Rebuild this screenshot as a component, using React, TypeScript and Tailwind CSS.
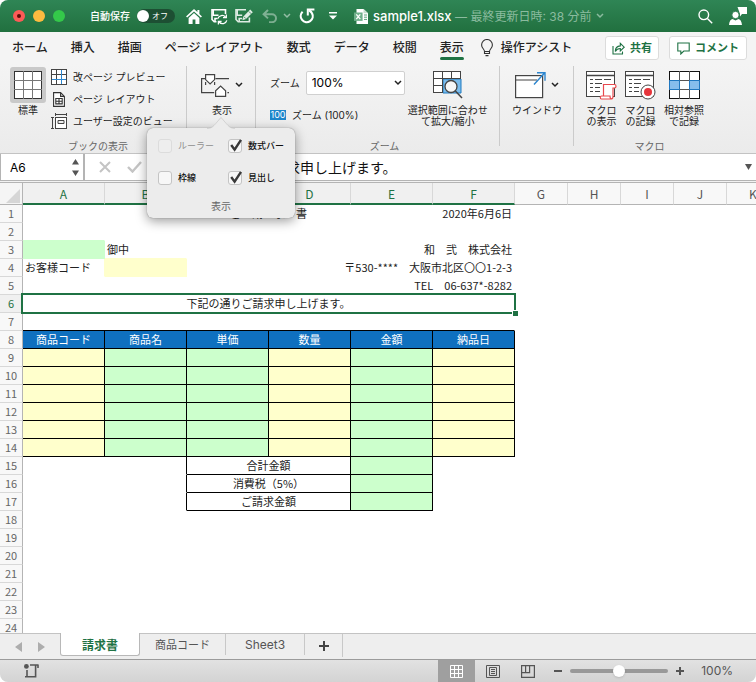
import { useState } from "react";
import type { ReactNode } from "react";

type Cell = {
  span?: number;
  text?: string;
  cls?: string;
  selected?: boolean;
};

const YELLOW = "bg-[#ffffcc]";
const GREEN = "bg-[#ccffcc]";
const BOX = "border-b-black border-r-black";
const HEAD = "bg-[#0f70bf] text-white text-center border-b-black border-r-black";
const SUM = "text-center border-b-black border-r-black";
const LEFT = "text-left pl-[2px]";
const RIGHT = "text-right pr-[2px]";

const itemRow: Cell[] = [
  { cls: `${YELLOW} ${BOX}` },
  { cls: `${GREEN} ${BOX}` },
  { cls: `${GREEN} ${BOX}` },
  { cls: `${YELLOW} ${BOX}` },
  { cls: `${GREEN} ${BOX}` },
  { cls: `${YELLOW} ${BOX}` },
];

const sumRow = (text: string): Cell[] => [
  {},
  { cls: "border-r-black" },
  { span: 2, text, cls: SUM },
  { cls: `${GREEN} ${BOX}` },
  {},
];

const rows: Cell[][] = [
  [
    { span: 5, text: "ご　請　求　書", cls: "text-center pl-[82px]" },
    { text: "2020年6月6日", cls: RIGHT },
  ],
  [{ cls: "border-b-[#ccffcc]" }, { span: 5 }],
  [
    { cls: `${GREEN} border-r-[#ccffcc] border-b-[#ccffcc]` },
    { text: "御中", cls: `${LEFT} border-b-[#ffffcc]` },
    { span: 4, text: "和　弐　株式会社", cls: RIGHT },
  ],
  [
    { text: "お客様コード", cls: `${LEFT} border-r-[#ffffcc]` },
    { cls: `${YELLOW} border-r-[#ffffcc] border-b-[#ffffcc]` },
    { span: 4, text: "〒530-****　大阪市北区〇〇1-2-3", cls: RIGHT },
  ],
  [{ span: 6, text: "TEL　06-637*-8282", cls: RIGHT }],
  [{ span: 6, text: "下記の通りご請求申し上げます。", cls: "text-center", selected: true }],
  [{ span: 6, cls: "border-b-black" }],
  ["商品コード", "商品名", "単価", "数量", "金額", "納品日"].map((text) => ({ text, cls: HEAD })),
  itemRow,
  itemRow,
  itemRow,
  itemRow,
  itemRow,
  itemRow,
  sumRow("合計金額"),
  sumRow("消費税（5%）"),
  sumRow("ご請求金額"),
  ...Array.from({ length: 7 }, (): Cell[] => [{ span: 6 }]),
];

function Chevron({ className = "" }: { className?: string }) {
  return (
    <svg className={className} width="8" height="6" viewBox="0 0 8 6" fill="none" stroke="currentColor" strokeWidth="1.5">
      <path d="M1 1l3 3 3-3" />
    </svg>
  );
}

/* ---------- title bar ---------- */

function TitleBar() {
  return (
    <header className="flex h-8 shrink-0 items-center bg-linear-to-b from-[#2f8555] to-[#21703f] pr-[9px] pl-[13px] text-white">
      <div className="flex gap-2">
        <button aria-label="閉じる" className="flex size-3 items-center justify-center rounded-full bg-[#fc5b57]">
          <span className="size-1 rounded-full bg-[#5c0b08]" />
        </button>
        <button aria-label="しまう" className="size-3 rounded-full bg-[#fdbb40]" />
        <button aria-label="拡大" className="size-3 rounded-full bg-[#34c84a]" />
      </div>
      <span className="ml-[25px] text-[10px] font-medium">自動保存</span>
      <button
        role="switch"
        aria-checked="false"
        aria-label="自動保存"
        className="ml-[7px] flex h-[14px] w-[38px] items-center gap-[3px] rounded-full bg-[#1d4f33]"
      >
        <span className="size-3 rounded-full bg-white" />
        <span className="text-[8px] leading-3">オフ</span>
      </button>
      <button aria-label="ホーム" className="ml-[11px]">
        <svg width="16" height="15" viewBox="0 0 16 15" fill="white">
          <path d="M8 0L0 7.4l1.2 1.2L8 2.4l6.8 6.2L16 7.4l-2.6-2.5V1h-2v2.1z" />
          <path d="M8 4L2.6 9v6h4v-4.6h2.8V15h4V9z" />
        </svg>
      </button>
      <button aria-label="保存して更新" className="ml-[9px]">
        <svg width="17" height="17" viewBox="0 0 17 17" fill="none" stroke="white" strokeWidth="1.6">
          <path d="M5.5 13.7H3.2L1 11.5V1.8h13.5V6" />
          <path d="M2.2 2v5.2h5.3" />
          <path d="M4 13.5v-3h2.6" />
          <path d="M6.9 10.6a4.3 4.3 0 0 1 7.6-1.4M15.8 12.4a4.3 4.3 0 0 1-7.6 1.6" strokeWidth="1.3" />
          <path d="M15.3 6.4v3.3H12M7.4 16.6v-3.2h3.2" strokeWidth="1.3" />
        </svg>
      </button>
      <button aria-label="名前を付けて保存" className="ml-[7px] opacity-85">
        <svg width="18" height="16" viewBox="0 0 18 16" fill="none" stroke="white" strokeWidth="1.6">
          <path d="M11 1.8H1v9.7l2.2 2.2h11.2V9.5" />
          <path d="M2.2 2v5.2h5" />
          <path d="M4.2 13.5v-3h3" />
          <path d="M7.4 12.2l1-3.8 6.8-6.8 2.6 2.6-6.8 6.8z" fill="white" stroke="none" />
          <path d="M9 8.8l1.8 1.8M13.8 3.4l2.4 2.4" stroke="#2a7b4c" strokeWidth=".8" />
        </svg>
      </button>
      <button aria-label="元に戻す" className="ml-[9px] opacity-40">
        <svg width="16" height="14" viewBox="0 0 16 14" fill="none" stroke="white" strokeWidth="2">
          <path d="M6 1L1.6 5.2 6 9.4M2 5.2h8a4 4 0 0 1 0 8H7" />
        </svg>
      </button>
      <Chevron className="ml-[5px] opacity-50" />
      <button aria-label="やり直し" className="ml-2">
        <svg width="16" height="16" viewBox="0 0 16 16" fill="none" stroke="white" strokeWidth="2.2">
          <path d="M3.6 3.8a6 6 0 1 0 9.4 1.4c-.6-1.2-1.6-2.2-3-3" />
          <path d="M15.4 1.4H8.8v6.2" strokeWidth="2" />
        </svg>
      </button>
      <button aria-label="クイック アクセスのカスタマイズ" className="ml-[14px]">
        <svg width="8" height="8" viewBox="0 0 8 8" fill="white">
          <path d="M0 0h8v1.6H0zM0 3.4h8L4 7.6z" />
        </svg>
      </button>
      <div className="ml-[17px] flex min-w-0 items-center gap-[5px]">
        <svg className="shrink-0" width="14" height="15" viewBox="0 0 14 15">
          <path d="M2.5 0h7L14 4.2V15H2.5z" fill="#fff" />
          <path d="M9.5 0L14 4.2H9.5z" fill="#c4ddcd" />
          <path d="M10 6h3M10 8.2h3M10 10.4h3" stroke="#5aa27a" strokeWidth="1" />
          <rect y="3.5" width="8.6" height="8.4" fill="#6fb08b" />
          <path d="M2.3 5.4l4 4.8M6.3 5.4l-4 4.8" stroke="#fff" strokeWidth="1.3" />
        </svg>
        <h1 className="truncate text-[13px] leading-4 font-medium">
          sample1.xlsx <span className="text-[12px] font-normal text-[#8bbb9f]">— 最終更新日時: 38 分前</span>
        </h1>
        <Chevron className="shrink-0 text-[#8bbb9f]" />
      </div>
      <div className="ml-auto flex items-center gap-4">
        <button aria-label="検索">
          <svg width="15" height="15" viewBox="0 0 15 15" fill="none" stroke="white" strokeWidth="1.4">
            <circle cx="5.8" cy="5.8" r="4.8" />
            <path d="M9.4 9.4l4.8 4.8" />
          </svg>
        </button>
        <button aria-label="アカウント">
          <svg width="18" height="18" viewBox="0 0 18 18" fill="white">
            <path d="M8.5 0H18v7h-5l-2 2.4V7z" />
            <circle cx="6.5" cy="8" r="3.7" stroke="#277a4a" strokeWidth="1" />
            <path d="M0 18c.2-4 2-6 3.6-6l2.9 1.6L9.4 12c1.6 0 3.3 2 3.6 6z" />
          </svg>
        </button>
      </div>
    </header>
  );
}

/* ---------- ribbon ---------- */

const tabs = ["ホーム", "挿入", "描画", "ページ レイアウト", "数式", "データ", "校閲", "表示"];

function RibbonTabs() {
  return (
    <nav className="flex h-8 shrink-0 items-center gap-[23px] bg-[#f4f4f4] pr-[9px] pl-3 text-[12px] font-medium whitespace-nowrap text-[#222]">
      {tabs.map((t) => (
        <button key={t} className="relative h-full">
          {t}
          {t === "表示" && <span className="absolute inset-x-0 bottom-[4px] h-[3px] rounded-full bg-[#1f7244]" />}
        </button>
      ))}
      <button className="-ml-[6px] flex items-center gap-2">
        <svg width="12" height="18" viewBox="0 0 12 18" fill="none" stroke="#333" strokeWidth="1.1">
          <path d="M3.5 12.5c0-2.5-2.9-3.2-2.9-6.6a5.4 5.4 0 0 1 10.8 0c0 3.4-2.9 4.1-2.9 6.6zM3.5 12.5v2h5v-2M4.5 16.6h3" />
        </svg>
        操作アシスト
      </button>
      <div className="ml-auto flex gap-[10px] text-[11px] font-bold text-[#1f7244]">
        <button className="flex h-6 items-center gap-[5px] rounded-[3px] border border-[#dcdcdc] bg-white px-[6px]">
          <svg width="13" height="13" viewBox="0 0 13 13" fill="none" stroke="currentColor" strokeWidth="1.1">
            <path d="M1 4v8h9.5V9.6" />
            <path d="M3.3 9.5c0-3.4 1.6-5.4 5-5.6V1.4L12.2 5.2 8.3 9V6.5c-2.4 0-3.8.8-5 3z" />
          </svg>
          共有
        </button>
        <button className="flex h-6 items-center gap-[5px] rounded-[3px] border border-[#dcdcdc] bg-white px-[7px]">
          <svg width="13" height="13" viewBox="0 0 13 13" fill="none" stroke="currentColor" strokeWidth="1.1">
            <path d="M.8 1h11.4v8H6.8l-3 3V9h-3z" />
          </svg>
          コメント
        </button>
      </div>
    </nav>
  );
}

function Group({ label, className, children }: { label?: string; className: string; children: ReactNode }) {
  return (
    <section className={`flex h-[87px] shrink-0 flex-col ${className}`}>
      <div className="relative flex flex-1 items-start">{children}</div>
      {label && <div className="text-center text-[10px] leading-[14px] text-[#666]">{label}</div>}
    </section>
  );
}

function Divider() {
  return <span className="h-20 w-px shrink-0 bg-[#cbcbcb]" />;
}

function BigButton({ lines, icon }: { lines: string[]; icon: ReactNode }) {
  return (
    <button className="flex flex-col items-center text-[10px] leading-[11px] whitespace-nowrap">
      <span className="mb-px flex h-[38px] items-center">{icon}</span>
      {lines.map((l) => (
        <span key={l}>{l}</span>
      ))}
    </button>
  );
}

function SmallButton({ text, icon }: { text: string; icon: ReactNode }) {
  return (
    <button className="flex h-[22px] items-center gap-[6px] text-[10px] whitespace-nowrap">
      <span className="flex w-4 justify-center">{icon}</span>
      {text}
    </button>
  );
}

function Tick({ label, checked, disabled }: { label: string; checked?: boolean; disabled?: boolean }) {
  const [on, setOn] = useState(!!checked);
  return (
    <label className={`flex items-center gap-[6px] text-[9px] leading-4 whitespace-nowrap ${disabled ? "text-[#8f8f8f]" : "font-medium text-[#111]"}`}>
      <span className="relative flex">
        <input
          type="checkbox"
          checked={on}
          disabled={disabled}
          onChange={(e) => setOn(e.target.checked)}
          className="size-[14px] appearance-none rounded-[3px] border border-[#c4c4c4] bg-[#f7f7f7] disabled:border-[#dcdcdc] disabled:bg-[#eeeeee]"
        />
        {on && (
          <svg className="pointer-events-none absolute top-0 left-[2px]" width="13" height="13" viewBox="0 0 13 13" fill="none" stroke="#3a3a3a" strokeWidth="2.4">
            <path d="M1.2 6l3.4 4.6L11 .8" />
          </svg>
        )}
      </span>
      {label}
    </label>
  );
}

function ShowPopover() {
  return (
    <div className="absolute top-[62px] -left-[40px] z-10 h-[90px] w-[148px] rounded-md bg-[#ececec] shadow-[0_3px_12px_rgba(0,0,0,0.4),0_0_1px_rgba(0,0,0,0.5)]">
      <svg className="absolute -top-[11px] left-[60px]" width="28" height="12" viewBox="0 0 28 12">
        <path d="M0 12c6 0 8-5 14-12 6 7 8 12 14 12z" fill="#ececec" />
        <path d="M0 11.5C6 11.5 8 7 14 .5c6 6.5 8 11 14 11" fill="none" stroke="#c8c8c8" strokeWidth=".7" />
      </svg>
      <div className="grid grid-cols-[70px_auto] gap-y-4 pt-[10px] pl-[11px]">
        <Tick label="ルーラー" disabled />
        <Tick label="数式バー" checked />
        <Tick label="枠線" />
        <Tick label="見出し" checked />
      </div>
      <div className="mt-[13px] text-center text-[10px] leading-[14px] text-[#666]">表示</div>
    </div>
  );
}

function MacroSheet({ children }: { children: ReactNode }) {
  return (
    <svg width="31" height="30" viewBox="0 0 31 30" fill="none" stroke="#444">
      <rect x=".5" y="1.5" width="28" height="25" fill="#fff" />
      <path d="M0 5.5h29" strokeWidth="1.4" />
      <path d="M4 9.5h3M9 9.5h7M18 9.5h7M4 13.5h3M9 13.5h7M4 17.5h3M9 17.5h5M4 21.5h3M9 21.5h5" />
      {children}
    </svg>
  );
}

function Ribbon() {
  const [zoom, setZoom] = useState("100%");
  return (
    <div className="flex h-[90px] shrink-0 border-b border-[#c3c3c3] bg-linear-to-b from-[#f4f4f4] to-[#ebebeb] pt-[2px] text-[#222]">
      <Group label="ブックの表示" className="w-[186px] pl-[10px]">
        <BigButton
          lines={["標準"]}
          icon={
            <span className="flex size-9 items-center justify-center rounded-[3px] bg-[#c9c9c9]">
              <svg width="28" height="28" viewBox="0 0 28 28" fill="none" stroke="#333">
                <rect x=".5" y=".5" width="27" height="27" fill="#fff" />
                <path d="M9.5 0v28M18.5 0v28M0 9.5h28M0 18.5h28" stroke="#777" />
              </svg>
            </span>
          }
        />
        <div className="ml-[5px]">
          <SmallButton
            text="改ページ プレビュー"
            icon={
              <svg width="16" height="16" viewBox="0 0 16 16" fill="none" stroke="#444">
                <rect x=".5" y=".5" width="15" height="15" fill="#fff" />
                <path d="M5.5 0v16M0 5.5h16" />
                <path d="M10.5 1v14M1 10.5h14" stroke="#2c86cf" />
              </svg>
            }
          />
          <SmallButton
            text="ページ レイアウト"
            icon={
              <svg width="12" height="15" viewBox="0 0 12 15" fill="none" stroke="#333" strokeWidth="1.1">
                <path d="M.6.6h7l3.8 3.8v10H.6zM7.6.6v3.8h3.8" fill="#fff" />
                <path d="M2.8 6.5h6.4v5.4H2.8zM6 6.5v5.4M2.8 9.2h6.4" />
              </svg>
            }
          />
          <SmallButton
            text="ユーザー設定のビュー"
            icon={
              <svg width="16" height="16" viewBox="0 0 16 16" fill="none" stroke="#444">
                <path d="M4.5 1.5h11M4.5 0v3M15.5 0v3M1.5 4v11M0 4.5h3M0 15.5h3" />
                <rect x="4.5" y="4.5" width="11" height="11" fill="#fff" />
                <path d="M7 7.5h6v3H7z" fill="#eee" />
              </svg>
            }
          />
        </div>
      </Group>
      <Divider />

      <Group className="w-[68px]">
        <div className="flex pl-[14px]">
          <BigButton
            lines={["表示"]}
            icon={
              <span className="flex items-center gap-[6px]">
                <svg width="28" height="23" viewBox="0 0 28 23" fill="none" stroke="#444" strokeWidth="1.2">
                  <path d="M4 4.6H.6v14h12.6M14.4 4.6H28M4.6 8v3M13.6 8v3M26.4 18.6H28" />
                  <path d="M4.6.6h9v5L9.1 10 4.6 5.6z" fill="#fff" />
                  <path d="M14.6 22.4h10v-5.6L19.6 12l-5 4.8z" fill="#fff" />
                </svg>
                <Chevron />
              </span>
            }
          />
        </div>
        <ShowPopover />
      </Group>
      <Divider />

      <Group label="ズーム" className="w-[243px] pl-[14px]">
        <div className="pt-[5px]">
          <div className="flex items-center gap-[6px] text-[10px]">
            <label htmlFor="zoom">ズーム</label>
            <div className="relative">
              <select
                id="zoom"
                value={zoom}
                onChange={(e) => setZoom(e.target.value)}
                className="h-6 w-[99px] appearance-none rounded-[2px] border border-[#d0d0d0] bg-white pl-[5px] text-[12px] leading-4 text-black"
              >
                <option>200%</option>
                <option>100%</option>
                <option>75%</option>
              </select>
              <Chevron className="pointer-events-none absolute top-[9px] right-[3px]" />
            </div>
          </div>
          <button className="mt-[14px] flex h-3 items-center gap-[6px] text-[10px]">
            <span className="flex h-[10px] w-4 items-center justify-center bg-[#1e86cb] text-[9px] leading-[10px] text-white">100</span>
            ズーム (100%)
          </button>
        </div>
        <div className="ml-[3px]">
          <BigButton
            lines={["選択範囲に合わせ", "て拡大/縮小"]}
            icon={
              <svg width="30" height="28" viewBox="0 0 30 28" fill="none" stroke="#444">
                <rect x=".5" y=".5" width="27" height="21" fill="#fff" />
                <path d="M10 8h18v14H10z" fill="#7bbcec" stroke="#1e7ac0" />
                <path d="M9.5 0v22M18.5 0v8M0 7.5h28M0 14.5h10" />
                <circle cx="18" cy="15.5" r="6" fill="#f6f6f6" strokeWidth="1.3" />
                <path d="M22.4 20l6.6 7" strokeWidth="1.5" />
              </svg>
            }
          />
        </div>
      </Group>
      <Divider />

      <Group className="w-[73px] pl-3">
        <BigButton
          lines={["ウインドウ"]}
          icon={
            <span className="flex items-center gap-[5px]">
              <svg width="31" height="27" viewBox="0 0 31 27" fill="none" stroke="#444" strokeWidth="1.2">
                <rect x=".6" y="3.6" width="27" height="22" fill="#fff" />
                <path d="M0 8h22" />
                <path d="M19 12.5L29.5 1M22 .8h8v8" stroke="#2c86cf" strokeWidth="1.4" />
              </svg>
              <Chevron />
            </span>
          }
        />
      </Group>
      <Divider />

      <Group label="マクロ" className="w-[139px] pl-3">
        <div className="flex gap-2">
          <BigButton
            lines={["マクロ", "の表示"]}
            icon={
              <MacroSheet>
                <path d="M17.5 14.5h11c2 0 2 3.5 0 3.5h-1.5v8.5c0 1.5-.6 2.5-2 2.5h-9.5c-1.6 0-1.6-3 0-3h2zM17.5 26h6.5c0 2 .5 3 1.6 3" fill="#fff" stroke="#e8484d" strokeWidth="1.2" />
              </MacroSheet>
            }
          />
          <BigButton
            lines={["マクロ", "の記録"]}
            icon={
              <MacroSheet>
                <circle cx="23" cy="22" r="7" fill="#fff" />
                <circle cx="23" cy="22" r="4" fill="#e6353b" stroke="none" />
              </MacroSheet>
            }
          />
          <BigButton
            lines={["相対参照", "で記録"]}
            icon={
              <svg width="31" height="28" viewBox="0 0 31 28" fill="none" stroke="#111">
                <rect x=".5" y=".5" width="30" height="27" fill="#fff" />
                <path d="M10.5 0v28M20.5 0v28M0 9.5h31M0 18.5h31" stroke="#555" />
                <path d="M.5 9.5h10v9H.5zM20.5 9.5h10v9h-10z" fill="#86bdec" stroke="#1f77c0" />
              </svg>
            }
          />
        </div>
      </Group>
    </div>
  );
}

/* ---------- formula bar ---------- */

function FormulaBar() {
  return (
    <div className="flex h-[29px] shrink-0 items-stretch border-b border-[#b4b4b4] bg-[#f2f2f2]">
      <div className="mb-px flex min-w-0 flex-1 items-center border-b border-[#b4b4b4] bg-white">
        <div className="flex h-full w-[85px] shrink-0 items-center border-r-2 border-l border-[#b4b4b4] pr-1 pl-[9px]">
          <input aria-label="名前ボックス" defaultValue="A6" className="w-full min-w-0 bg-transparent pt-[2px] text-[12px] outline-none" />
          <svg className="shrink-0" width="7" height="17" viewBox="0 0 7 17" fill="#555">
            <path d="M3.5 0L7 5.5H0zM3.5 17L7 11.5H0z" />
          </svg>
        </div>
        <button aria-label="キャンセル" className="ml-[14px]">
          <svg width="12" height="12" viewBox="0 0 12 12" stroke="#c4c4c4" strokeWidth="2">
            <path d="M1 1l10 10M11 1L1 11" />
          </svg>
        </button>
        <button aria-label="入力" className="ml-4">
          <svg width="15" height="12" viewBox="0 0 15 12" fill="none" stroke="#c4c4c4" strokeWidth="2.4">
            <path d="M1 6l4.5 4.5L14 1" />
          </svg>
        </button>
        <button aria-label="関数の挿入" className="ml-[18px] w-5 font-[family-name:'Liberation_Serif',serif] text-[13px] text-[#555] italic">
          fx
        </button>
        <input
          aria-label="数式バー"
          defaultValue="下記の通りご請求申し上げます。"
          className="ml-2 min-w-0 flex-1 bg-transparent font-[family-name:'Noto_Sans_CJK_JP',sans-serif] text-[14px] leading-5 text-[#111] outline-none"
        />
        <button aria-label="数式バーの展開" className="mr-1">
          <svg width="7" height="6" viewBox="0 0 7 6" fill="#555">
            <path d="M0 0h7L3.5 6z" />
          </svg>
        </button>
      </div>
    </div>
  );
}

/* ---------- sheet ---------- */

const wide = ["A", "B", "C", "D", "E", "F"];
const narrow = ["G", "H", "I", "J", "K"];

function Sheet() {
  return (
    <main className="min-h-0 flex-1 overflow-hidden bg-white font-[family-name:'Noto_Sans_CJK_JP',sans-serif]">
      <table className="w-[780px] table-fixed border-separate border-spacing-0 text-[11px] leading-[17px] text-[#222]">
        <colgroup>
          <col className="w-[23px]" />
          {wide.map((c) => (
            <col key={c} className="w-[82px]" />
          ))}
          {narrow.map((c) => (
            <col key={c} className="w-[53px]" />
          ))}
        </colgroup>
        <thead>
          <tr className="h-[22px]">
            <th className="border-r border-b border-[#b4b4b4] bg-[#f5f5f5] p-0">
              <svg className="mt-1 ml-[6px]" width="14" height="14" viewBox="0 0 14 14" fill="#d6d6d6">
                <path d="M14 0v14H0z" />
              </svg>
            </th>
            {wide.map((c) => (
              <th key={c} className="border-r border-b-2 border-r-[#d8d8d8] border-b-[#1f7244] bg-[#f0f0f0] p-0 text-[12px] font-normal text-[#1f7244]">
                {c}
              </th>
            ))}
            {narrow.map((c) => (
              <th key={c} className="border-r border-b border-r-[#d8d8d8] border-b-[#b4b4b4] bg-[#f8f8f8] p-0 text-[12px] font-normal text-[#555]">
                {c}
              </th>
            ))}
          </tr>
        </thead>
        <tbody>
          {rows.map((cells, i) => (
            <tr key={i} className="h-[18px]">
              <th
                className={`border-r border-b border-r-[#b4b4b4] border-b-[#d8d8d8] p-0 font-normal ${
                  i === 5 ? "bg-[#f0f0f0] text-[#1f7244]" : "bg-[#f8f8f8] text-[#666]"
                }`}
              >
                {i + 1}
              </th>
              {cells.map((c, j) => (
                <td
                  key={j}
                  colSpan={c.span}
                  className={`border-r border-b border-transparent bg-clip-padding py-0 whitespace-nowrap ${
                    c.selected ? "relative" : ""
                  } ${c.cls ?? ""}`}
                >
                  {c.text}
                  {c.selected && (
                    <span className="pointer-events-none absolute -inset-[2px] border-2 border-[#1f7244]">
                      <span className="absolute -right-[4px] -bottom-[4px] size-[6px] border-t border-l border-white bg-[#1f7244]" />
                    </span>
                  )}
                </td>
              ))}
              <td colSpan={5} className="p-0" />
            </tr>
          ))}
        </tbody>
      </table>
    </main>
  );
}

/* ---------- bottom bars ---------- */

function SheetTabs() {
  return (
    <div className="flex h-[26px] shrink-0 items-start border-t border-[#c3c3c3] bg-[#eeeeee] text-[12px] leading-4 text-[#555]">
      <div className="flex h-[25px] w-[60px] items-center gap-4 pl-[15px]">
        <button aria-label="前のシート">
          <svg width="7" height="10" viewBox="0 0 7 10" fill="#adadad">
            <path d="M7 0v10L0 5z" />
          </svg>
        </button>
        <button aria-label="次のシート">
          <svg width="7" height="10" viewBox="0 0 7 10" fill="#adadad">
            <path d="M0 0v10l7-5z" />
          </svg>
        </button>
      </div>
      <button className="-mt-px h-[23px] w-[80px] rounded-b-[3px] border border-t-0 border-[#b8b8b8] bg-white pt-[3px] font-bold text-[#1f7244]">
        請求書
      </button>
      <button className="h-[21px] w-[86px] border-r border-[#c8c8c8] pt-px text-[11px]">商品コード</button>
      <button className="h-[21px] w-[79px] border-r border-[#c8c8c8] pt-px">Sheet3</button>
      <button aria-label="シートの追加" className="flex h-[23px] w-[38px] items-center justify-center border-r border-[#c8c8c8]">
        <svg width="10" height="10" viewBox="0 0 10 10" stroke="#444" strokeWidth="2">
          <path d="M5 0v10M0 5h10" />
        </svg>
      </button>
    </div>
  );
}

function StatusBar() {
  const [value, setValue] = useState(50);
  return (
    <footer className="flex h-[23px] shrink-0 items-center border-t border-[#9b9b9b] bg-linear-to-b from-[#e2e2e2] to-[#d3d3d3] pr-[23px] pl-6 text-[#555]">
      <button aria-label="マクロの記録">
        <svg width="15" height="14" viewBox="0 0 15 14" fill="none" stroke="#555" strokeWidth="1.6">
          <circle cx="2.4" cy="2.4" r="2.4" fill="#555" stroke="none" />
          <path d="M6 1h8.6M11.6 1v11.8H1M3 6v6M14 1v3" />
        </svg>
      </button>
      <div className="ml-auto flex h-full items-center">
        <button aria-label="標準表示" className="flex h-full w-[37px] items-center justify-center bg-[#9f9f9f]">
          <svg width="13" height="13" viewBox="0 0 13 13" fill="none" stroke="#fff">
            <path d="M.5.5h12v12H.5zM4.5 0v13M8.5 0v13M0 4.5h13M0 8.5h13" />
          </svg>
        </button>
        <button aria-label="ページ レイアウト表示" className="flex w-[35px] items-center justify-center">
          <svg width="14" height="13" viewBox="0 0 14 13" fill="none" stroke="#555">
            <path d="M.5.5h13v12H.5z" />
            <path d="M3.5 2.5h7v8h-7zM5 4.5h4M5 6.5h4M5 8.5h4" />
          </svg>
        </button>
        <button aria-label="改ページ プレビュー表示" className="flex w-[36px] items-center justify-center">
          <svg width="14" height="13" viewBox="0 0 14 13" fill="none" stroke="#555" strokeWidth="1.2">
            <path d="M.6.6h12.8v11.8H.6zM4.6.6v7M8.6.6v7H.6" />
          </svg>
        </button>
        <button aria-label="縮小" className="ml-2" onClick={() => setValue(Math.max(0, value - 10))}>
          <svg width="8" height="8" viewBox="0 0 8 8" stroke="#555" strokeWidth="2">
            <path d="M0 4h8" />
          </svg>
        </button>
        <input
          type="range"
          aria-label="ズーム倍率"
          value={value}
          onChange={(e) => setValue(Number(e.target.value))}
          className="mx-2 h-1 w-[98px] appearance-none rounded-full bg-[#999] [&::-webkit-slider-thumb]:size-3 [&::-webkit-slider-thumb]:appearance-none [&::-webkit-slider-thumb]:rounded-full [&::-webkit-slider-thumb]:bg-white [&::-webkit-slider-thumb]:shadow"
        />
        <button aria-label="拡大" onClick={() => setValue(Math.min(100, value + 10))}>
          <svg width="8" height="8" viewBox="0 0 8 8" stroke="#555" strokeWidth="2">
            <path d="M4 0v8M0 4h8" />
          </svg>
        </button>
        <span className="ml-[17px] text-[12px] leading-4">100%</span>
      </div>
    </footer>
  );
}

export default function App() {
  return (
    <div
      lang="ja"
      className="flex h-screen flex-col overflow-hidden rounded-lg bg-[#f4f4f4] font-[family-name:Inter,'Noto_Sans_CJK_JP',sans-serif]"
    >
      <TitleBar />
      <RibbonTabs />
      <Ribbon />
      <FormulaBar />
      <Sheet />
      <SheetTabs />
      <StatusBar />
    </div>
  );
}
